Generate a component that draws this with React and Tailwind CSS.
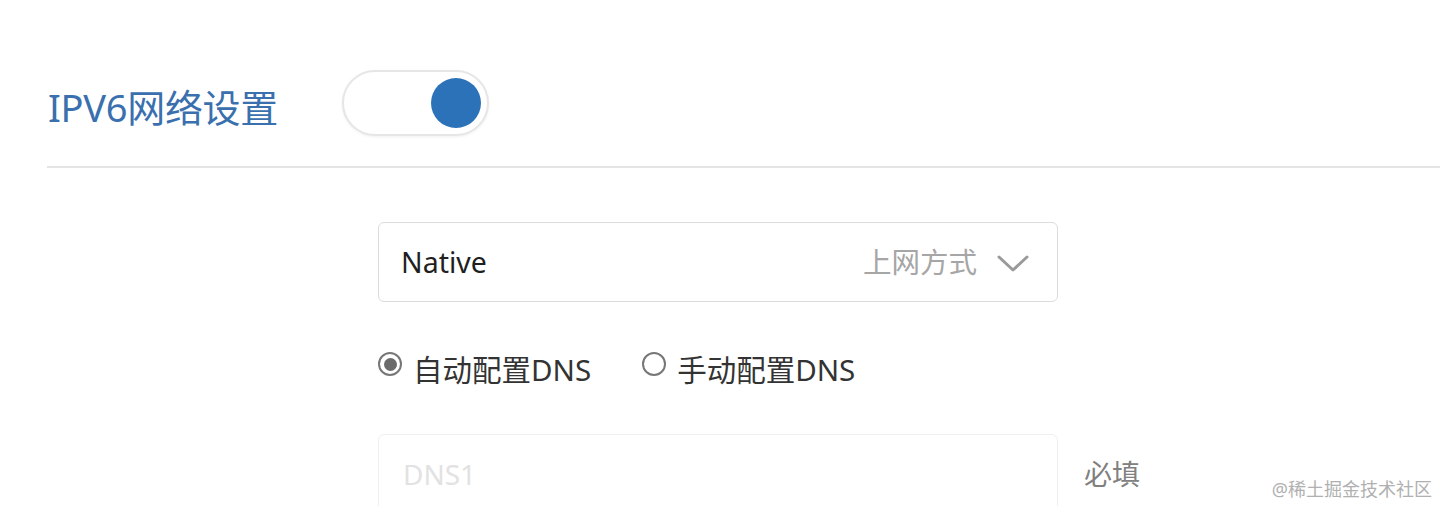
import React, { useState } from 'react';

const font = { fontFamily: '"Noto Sans", "Noto Sans CJK SC", sans-serif' };

const Radio = ({ checked, label, onClick }) => (
    <button type="button" onClick={onClick} className="flex items-center gap-[11px] text-[29.5px] text-[#333] leading-none whitespace-nowrap">
        <span className="w-[24px] h-[24px] mb-[12px] rounded-full border-2 border-[#777] flex items-center justify-center bg-white">
            {checked && <span className="w-[13px] h-[13px] rounded-full bg-[#6b6b6b]"></span>}
        </span>
        <span>{label}</span>
    </button>
);

const App = () => {
    const [enabled, setEnabled] = useState(true);
    const [dnsMode, setDnsMode] = useState('auto');

    return (
        <div className="w-[1440px] h-[506px] bg-white overflow-hidden relative" style={font}>
            <div className="pl-[47px] pt-[70px]">
                {/* Header row */}
                <div className="flex items-center h-[66px] pl-[1px]">
                    <h2 className="text-[38px] leading-none text-[#3a70ad] tracking-[-0.3px] mt-[8px] whitespace-nowrap">IPV6网络设置</h2>
                    <button
                        type="button"
                        onClick={() => setEnabled(!enabled)}
                        className="ml-[64px] w-[147px] h-[66px] rounded-full border-2 border-[#e6e6e6] bg-white shadow-[0_1px_3px_rgba(0,0,0,0.06)] flex items-center px-[6px] justify-end"
                    >
                        <span className="w-[50px] h-[50px] rounded-full bg-[#2c72b8]"></span>
                    </button>
                </div>
                <div className="mt-[30px] border-b-2 border-[#e4e4e4]"></div>
            </div>

            {/* Form */}
            <div className="ml-[378px] mt-[54px] w-[680px]">
                <div className="h-[80px] rounded-[6px] border border-[#dcdcdc] flex items-center pl-[22px] pr-[28px]">
                    <span className="text-[28.5px] text-[#1f1f1f]">Native</span>
                    <span className="ml-auto text-[28.5px] text-[#a6a6a6]">上网方式</span>
                    <svg className="ml-[20px] mt-[4px]" width="32" height="18" viewBox="0 0 32 18" fill="none">
                        <path d="M2 2 L16 15 L30 2" stroke="#9a9a9a" strokeWidth="3" strokeLinecap="round" strokeLinejoin="round" />
                    </svg>
                </div>

                <div className="mt-[45px] flex items-center gap-[51px] h-[46px]">
                    <Radio checked={dnsMode === 'auto'} label="自动配置DNS" onClick={() => setDnsMode('auto')} />
                    <Radio checked={dnsMode === 'manual'} label="手动配置DNS" onClick={() => setDnsMode('manual')} />
                </div>

                <div className="mt-[41px] flex items-center">
                    <input
                        placeholder="DNS1"
                        className="w-[680px] h-[80px] shrink-0 rounded-[6px] border border-[#f0f0f0] px-[24px] text-[28px] placeholder:text-[#e2e2e2] outline-none"
                    />
                    <span className="ml-[26px] text-[28px] text-[#808080] whitespace-nowrap">必填</span>
                </div>
            </div>

            <span className="absolute right-[8px] bottom-[8px] text-[18px] text-[#b0b0b0] leading-none whitespace-nowrap">@稀土掘金技术社区</span>
        </div>
    );
};

export default App;
